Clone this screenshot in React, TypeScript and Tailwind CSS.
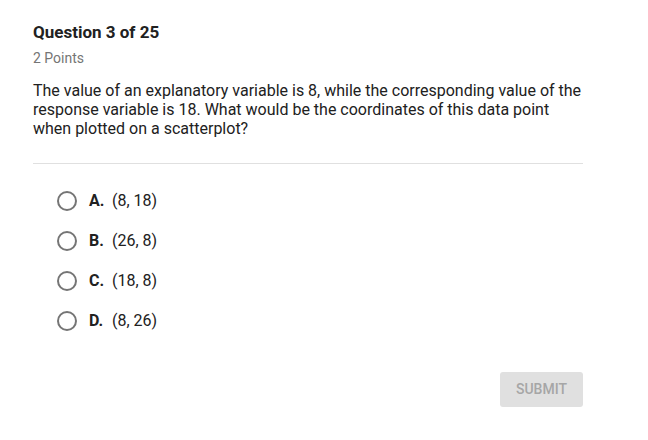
const options = [
  { letter: "A.", value: "(8, 18)" },
  { letter: "B.", value: "(26, 8)" },
  { letter: "C.", value: "(18, 8)" },
  { letter: "D.", value: "(8, 26)" },
];

export default function App() {
  return (
    <div className="w-[648px] h-[440px] bg-white font-['Roboto',sans-serif] text-[#212121] pl-[33px] pt-[22px]">
      <div className="w-[550px]">
        <h1 className="text-[17px] font-bold leading-[20px]">Question 3 of 25</h1>
        <div className="text-[14px] text-[#757575] mt-[8px] leading-[16px]">2 Points</div>
        <p className="text-[16px] leading-[19px] mt-[15px]">
          The value of an explanatory variable is 8, while the corresponding value of the
          response variable is 18. What would be the coordinates of this data point
          when plotted on a scatterplot?
        </p>
        <div className="border-t border-[#e0e0e0] mt-[25px]" />
        <div className="flex flex-col mt-[27px] pl-[24px] gap-[20px]">
          {options.map((o) => (
            <label key={o.letter} className="flex items-center h-[20px] cursor-pointer">
              <span className="w-[20px] h-[20px] rounded-full border-2 border-[#757575] shrink-0" />
              <span className="ml-[12px] text-[16px] font-bold w-[23px]">{o.letter}</span>
              <span className="text-[16px]">{o.value}</span>
            </label>
          ))}
        </div>
        <div className="flex justify-end mt-[41px]">
          <button className="w-[83px] h-[35px] rounded-[3px] bg-[#e0e0e0] text-[#a6a6a6] text-[14px] font-medium">
            SUBMIT
          </button>
        </div>
      </div>
    </div>
  );
}
